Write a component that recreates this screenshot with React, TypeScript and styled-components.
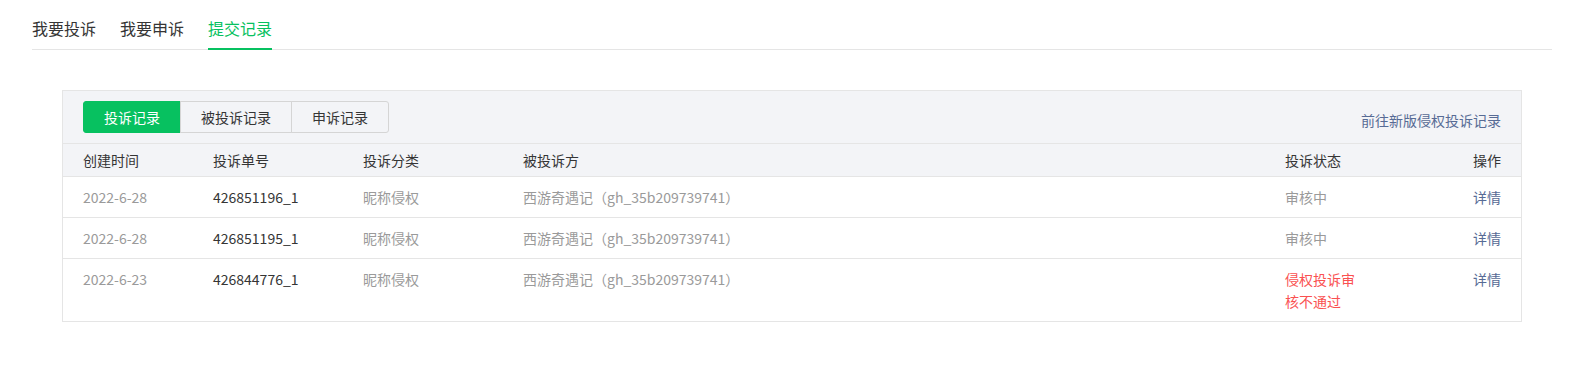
import React from "react";
import styled, { createGlobalStyle } from "styled-components";

const GlobalStyle = createGlobalStyle`
  html, body { margin: 0; padding: 0; background: #fff; }
  body {
    font-family: "Noto Sans CJK SC", "Noto Sans", "Liberation Sans", sans-serif;
    color: #353535;
  }
`;

const Page = styled.div`
  padding: 0 18px 0 32px;
`;

const Nav = styled.div`
  display: flex;
  gap: 24px;
  padding-top: 16px;
  border-bottom: 1px solid #e5e5e5;
`;

const NavTab = styled.div<{ $active?: boolean }>`
  font-size: 16px;
  line-height: 24px;
  padding-bottom: 8px;
  margin-bottom: -1px;
  border-bottom: 2px solid ${(p) => (p.$active ? "#07c160" : "transparent")};
  color: ${(p) => (p.$active ? "#07c160" : "#353535")};
  cursor: pointer;
`;

const Card = styled.div`
  margin: 40px 30px 0;
  border: 1px solid #e5e5e5;
`;

const Toolbar = styled.div`
  display: flex;
  justify-content: space-between;
  align-items: flex-end;
  padding: 10px 20px;
  background: #f3f4f7;
  border-bottom: 1px solid #e5e5e5;
`;

const Segmented = styled.div`
  display: flex;
`;

const SegButton = styled.div<{ $active?: boolean }>`
  height: 30px;
  line-height: 30px;
  padding: 0 20px;
  font-size: 14px;
  border: 1px solid ${(p) => (p.$active ? "#07c160" : "#d5d5d5")};
  background: ${(p) => (p.$active ? "#07c160" : "#f3f4f7")};
  color: ${(p) => (p.$active ? "#fff" : "#353535")};
  & + & { margin-left: -1px; }
  &:first-child { border-radius: 3px 0 0 3px; }
  &:last-child { border-radius: 0 3px 3px 0; }
`;

const Link = styled.a`
  font-size: 14px;
  line-height: 20px;
  margin-bottom: 3px;
  color: #576b95;
  text-decoration: none;
`;

const Row = styled.div<{ $head?: boolean }>`
  display: grid;
  grid-template-columns: 130px 150px 160px 762px 80px 1fr;
  padding: ${(p) => (p.$head ? "0 20px" : "9px 20px")};
  font-size: 14px;
  line-height: ${(p) => (p.$head ? "32px" : "22px")};
  background: ${(p) => (p.$head ? "#f3f4f7" : "#fff")};
  border-bottom: 1px solid #e5e5e5;
  &:last-child { border-bottom: none; }
`;

const Cell = styled.div<{ $tone?: "gray" | "dark" | "red" | "link"; $right?: boolean }>`
  text-align: ${(p) => (p.$right ? "right" : "left")};
  color: ${(p) =>
    p.$tone === "gray"
      ? "#9a9a9a"
      : p.$tone === "red"
      ? "#fa5151"
      : p.$tone === "link"
      ? "#576b95"
      : "#353535"};
`;

type Rec = { date: string; id: string; status: string; failed?: boolean };

const records: Rec[] = [
  { date: "2022-6-28", id: "426851196_1", status: "审核中" },
  { date: "2022-6-28", id: "426851195_1", status: "审核中" },
  { date: "2022-6-23", id: "426844776_1", status: "侵权投诉审核不通过", failed: true },
];

export default function App() {
  return (
    <Page>
      <GlobalStyle />
      <Nav>
        <NavTab>我要投诉</NavTab>
        <NavTab>我要申诉</NavTab>
        <NavTab $active>提交记录</NavTab>
      </Nav>
      <Card>
        <Toolbar>
          <Segmented>
            <SegButton $active>投诉记录</SegButton>
            <SegButton>被投诉记录</SegButton>
            <SegButton>申诉记录</SegButton>
          </Segmented>
          <Link href="#">前往新版侵权投诉记录</Link>
        </Toolbar>
        <Row $head>
          <Cell>创建时间</Cell>
          <Cell>投诉单号</Cell>
          <Cell>投诉分类</Cell>
          <Cell>被投诉方</Cell>
          <Cell>投诉状态</Cell>
          <Cell $right>操作</Cell>
        </Row>
        {records.map((r) => (
          <Row key={r.id}>
            <Cell $tone="gray">{r.date}</Cell>
            <Cell>{r.id}</Cell>
            <Cell $tone="gray">昵称侵权</Cell>
            <Cell $tone="gray">西游奇遇记（gh_35b209739741）</Cell>
            <Cell $tone={r.failed ? "red" : "gray"}>{r.status}</Cell>
            <Cell $tone="link" $right>详情</Cell>
          </Row>
        ))}
      </Card>
    </Page>
  );
}
